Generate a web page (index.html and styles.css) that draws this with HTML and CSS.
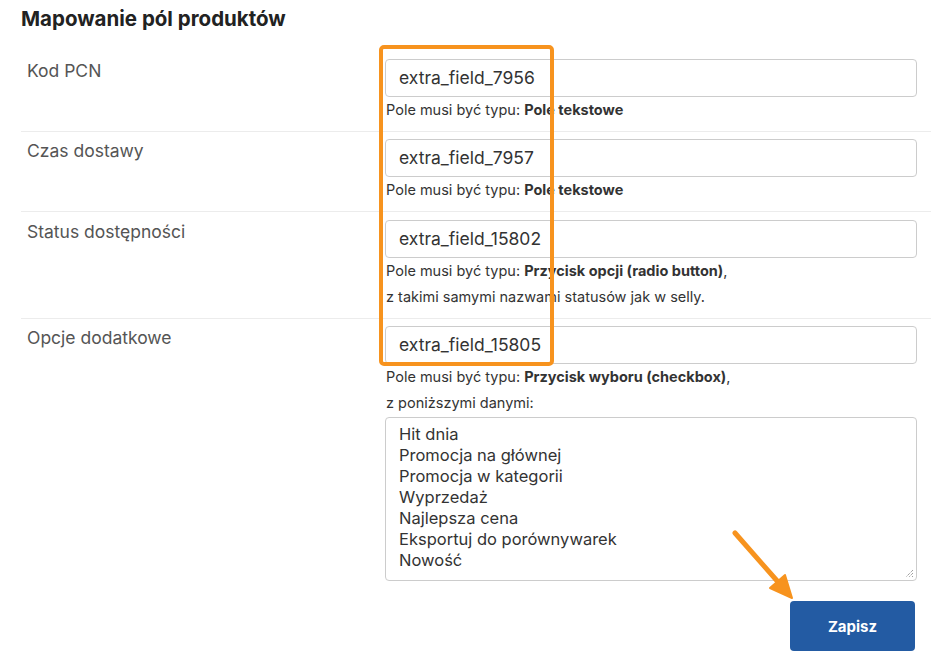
FILE: index.html
```html
<!DOCTYPE html>
<html lang="pl">
<head>
<meta charset="utf-8">
<link rel="stylesheet" href="styles.css">
</head>
<body>
<div class="page">
  <h2 class="title">Mapowanie pól produktów</h2>
  <div class="rows">
    <div class="row">
      <div class="label">Kod PCN</div>
      <div class="field">
        <div class="input">extra_field_7956</div>
        <div class="hint">Pole musi być typu: <b>Pole tekstowe</b></div>
      </div>
    </div>
    <div class="row">
      <div class="label">Czas dostawy</div>
      <div class="field">
        <div class="input">extra_field_7957</div>
        <div class="hint">Pole musi być typu: <b>Pole tekstowe</b></div>
      </div>
    </div>
    <div class="row tall">
      <div class="label">Status dostępności</div>
      <div class="field">
        <div class="input">extra_field_15802</div>
        <div class="hint">Pole musi być typu: <b>Przycisk opcji (radio button)</b>,</div>
        <div class="hint">z takimi samymi nazwami statusów jak w selly.</div>
      </div>
    </div>
    <div class="row last">
      <div class="label">Opcje dodatkowe</div>
      <div class="field">
        <div class="input">extra_field_15805</div>
        <div class="hint">Pole musi być typu: <b>Przycisk wyboru (checkbox)</b>,</div>
        <div class="hint">z poniższymi danymi:</div>
        <div class="textarea">Hit dnia
Promocja na głównej
Promocja w kategorii
Wyprzedaż
Najlepsza cena
Eksportuj do porównywarek
Nowość<svg class="grip" width="9" height="9" viewBox="0 0 9 9"><path d="M8 1 L1 8 M8 4 L4 8 M8 7 L7 8" stroke="#777" stroke-width="1" stroke-dasharray="1 1"/></svg></div>
        <div class="actions"><button class="btn">Zapisz</button></div>
      </div>
    </div>
  </div>
  <div class="highlight"></div>
  <svg class="arrow" width="931" height="663" viewBox="0 0 931 663">
    <line x1="735" y1="533" x2="779" y2="583" stroke="#F7931E" stroke-width="5" stroke-linecap="round"/>
    <polygon points="792,598 770,588 785,575" fill="#F7931E" stroke="#F7931E" stroke-width="2" stroke-linejoin="round"/>
  </svg>
</div>
</body>
</html>
```

FILE: styles.css
```css
html, body {
  margin: 0;
  padding: 0;
  background: #fff;
}
body {
  font-family: Inter, "Noto Sans", sans-serif;
  color: #333;
}
.page {
  position: relative;
  width: 931px;
  height: 663px;
  overflow: hidden;
}
.title {
  margin: 0;
  padding: 7px 0 0 21px;
  height: 52px;
  box-sizing: border-box;
  font-size: 20.5px;
  line-height: 24px;
  font-weight: 700;
  color: #222;
}
.rows {
  padding-left: 21px;
}
.row {
  display: grid;
  grid-template-columns: 364px 532px;
  padding: 7px 0 8px;
  border-bottom: 1px solid #ececec;
}
.row.tall {
  padding-top: 8px;
}
.row.last {
  border-bottom: none;
}
.label {
  padding: 0 0 0 6px;
  font-size: 17.5px;
  line-height: 24px;
  color: #555;
}
.field {
  display: flex;
  flex-direction: column;
}
.input {
  height: 38px;
  box-sizing: border-box;
  border: 1px solid #ccc;
  border-radius: 4px;
  padding: 0 13px;
  font-size: 17.5px;
  line-height: 36px;
  color: #333;
}
.hint {
  font-size: 14.5px;
  line-height: 26px;
  color: #333;
  padding-left: 1px;
}
.hint b {
  font-weight: 700;
  color: #333;
}
.textarea {
  position: relative;
  margin-top: 1px;
  height: 164px;
  box-sizing: border-box;
  border: 1px solid #ccc;
  border-radius: 4px;
  padding: 6px 13px;
  font-size: 16.5px;
  line-height: 21px;
  color: #333;
  white-space: pre;
}
.grip {
  position: absolute;
  right: 2px;
  bottom: 2px;
}
.actions {
  display: flex;
  justify-content: flex-end;
  padding-top: 20px;
  padding-right: 2px;
}
.btn {
  width: 125px;
  height: 50px;
  border: none;
  border-radius: 4px;
  background: #235ba3;
  color: #fff;
  font-family: Inter, "Noto Sans", sans-serif;
  font-size: 15px;
  font-weight: 700;
}
.highlight {
  position: absolute;
  left: 379px;
  top: 45px;
  width: 175px;
  height: 321px;
  box-sizing: border-box;
  border: 4px solid #F7931E;
  border-radius: 5px;
}
.arrow {
  position: absolute;
  left: 0;
  top: 0;
  pointer-events: none;
}
```
